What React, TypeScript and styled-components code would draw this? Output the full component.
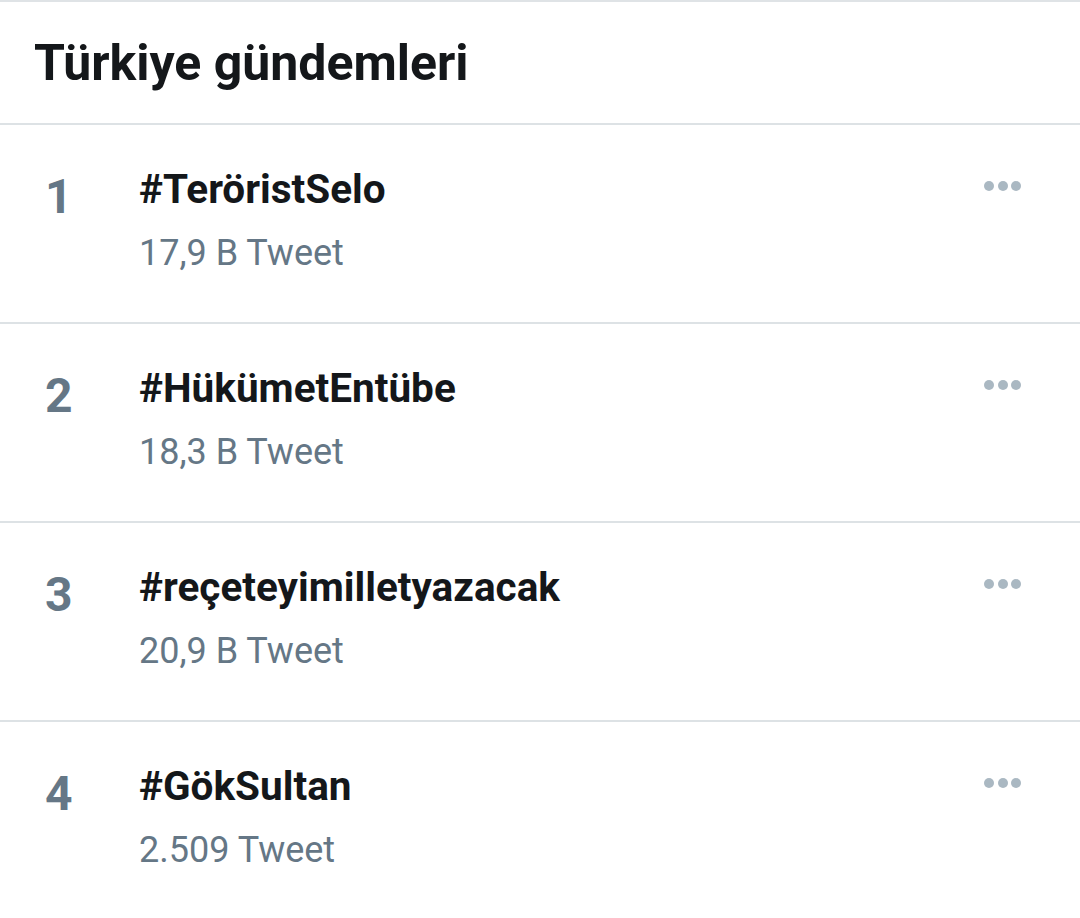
import styled, { createGlobalStyle } from "styled-components";

const GlobalStyle = createGlobalStyle`
    html, body {
        margin: 0;
        padding: 0;
        background: #ffffff;
    }
    body {
        font-family: Roboto, "Noto Sans", "Liberation Sans", sans-serif;
        color: #14171a;
    }
`

const Panel = styled.div`
    width: 1080px;
    height: 918px;
    overflow: hidden;
    border-top: 2px solid #dfe3e6;
    box-sizing: border-box;
`

const Header = styled.div`
    height: 121px;
    display: flex;
    align-items: center;
    padding-left: 34px;
    border-bottom: 2px solid #dde2e5;
`

const HeaderTitle = styled.h1`
    margin: 0;
    font-size: 50px;
    font-weight: 700;
    line-height: 1;
    color: #14171a;
`

const TrendRow = styled.div`
    height: 197px;
    display: flex;
    align-items: flex-start;
    border-bottom: 2px solid #dde2e5;
`

const Rank = styled.div`
    width: 139px;
    padding-left: 45px;
    padding-top: 48px;
    box-sizing: border-box;
    font-size: 48px;
    font-weight: 700;
    color: #657786;
    line-height: 1;
`

const TrendInfo = styled.div`
    flex: 1;
    padding-top: 40px;
`

const TrendName = styled.div`
    font-size: 40.5px;
    font-weight: 700;
    color: #14171a;
    line-height: 48px;
`

const TrendCount = styled.div`
    margin-top: 19px;
    font-size: 36px;
    color: #657786;
    line-height: 43px;
`

const MoreButton = styled.div`
    padding-top: 56px;
    padding-right: 59px;
    display: flex;
    gap: 3.5px;
`

const Dot = styled.span`
    width: 10px;
    height: 10px;
    border-radius: 50%;
    background: #aab8c2;
`

const trends = [
    { rank: 1, name: "#TeröristSelo", count: "17,9 B Tweet" },
    { rank: 2, name: "#HükümetEntübe", count: "18,3 B Tweet" },
    { rank: 3, name: "#reçeteyimilletyazacak", count: "20,9 B Tweet" },
    { rank: 4, name: "#GökSultan", count: "2.509 Tweet" },
]

export default function App() {
    return (
        <>
            <GlobalStyle />
            <Panel>
                <Header>
                    <HeaderTitle>Türkiye gündemleri</HeaderTitle>
                </Header>
                {trends.map((t) => (
                    <TrendRow key={t.rank}>
                        <Rank>{t.rank}</Rank>
                        <TrendInfo>
                            <TrendName>{t.name}</TrendName>
                            <TrendCount>{t.count}</TrendCount>
                        </TrendInfo>
                        <MoreButton>
                            <Dot />
                            <Dot />
                            <Dot />
                        </MoreButton>
                    </TrendRow>
                ))}
            </Panel>
        </>
    )
}
